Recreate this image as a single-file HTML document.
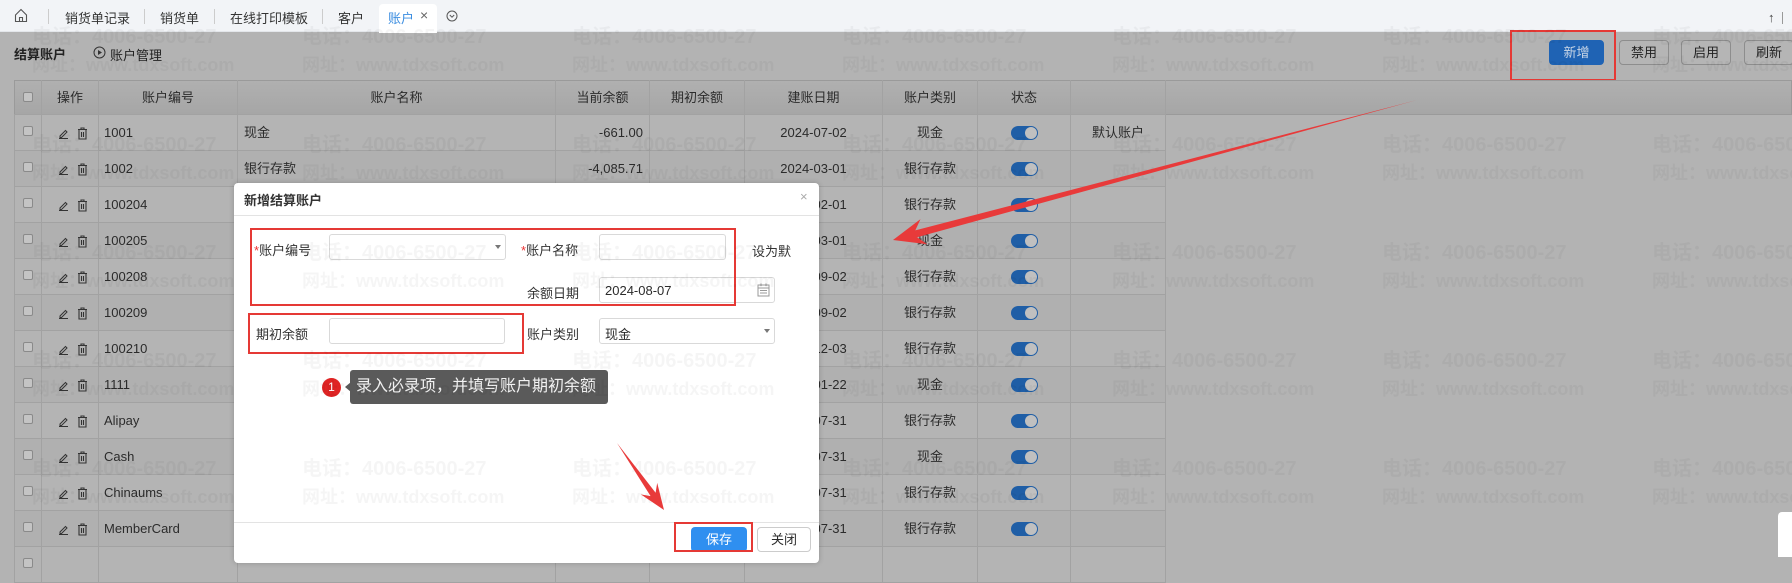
<!DOCTYPE html>
<html><head><meta charset="utf-8"><style>
*{margin:0;padding:0;box-sizing:border-box}
body{width:1792px;height:557px;overflow:hidden;position:relative;font-family:"Liberation Sans","Noto Sans CJK SC",sans-serif;font-size:13px;color:#2b2b2b;background:#b3b3b3}
.a{position:absolute}
.tabbar{left:0;top:0;width:1792px;height:32px;background:#f2f4f7;border-bottom:1px solid #e3e6ea}
.tab{position:absolute;top:8px;font-size:13px;color:#333}
.sep{position:absolute;top:9px;width:1px;height:15px;background:#ccc}
.btn{position:absolute;top:40px;height:25px;border:1px solid #8d8d8d;border-radius:4px;background:#b5b5b5;font-size:13px;text-align:center;line-height:23px;color:#222}
.hdr{left:14px;top:80px;width:1778px;height:35px;background:linear-gradient(#b0b0b0,#a6a6a6);border:1px solid #9a9a9a}
.cell{position:absolute;height:36px;line-height:36px;border-right:1px solid #a2a2a2;border-bottom:1px solid #a2a2a2;white-space:nowrap;overflow:hidden}
.row{position:absolute;left:14px;width:1152px;height:36px}
.cb{position:absolute;width:10px;height:10px;border:1px solid #8a8a8a;border-radius:2px;background:#c4c4c4}
.tg{position:absolute;width:27px;height:14px;border-radius:7px;background:#1f5ea6}
.tg:after{content:"";position:absolute;right:1px;top:1px;width:12px;height:12px;border-radius:50%;background:#c0c0c0}
.wm{position:absolute;font-weight:bold;color:rgba(0,0,0,0.04);white-space:nowrap}
.inp{position:absolute;height:26px;border:1px solid #d9d9d9;border-radius:3px;background:#fff}
.lbl{position:absolute;font-size:13px;color:#333}
.rb{position:absolute;border:2px solid #e53935}
</style></head><body>
<div class="a tabbar">
 <svg class="a" style="left:14px;top:8px" width="14" height="15" viewBox="0 0 14 15"><path d="M1.5 7 L7 1.5 L12.5 7 V13.5 H1.5 Z M5.5 13.5 V9.5 H8.5 V13.5" fill="none" stroke="#555" stroke-width="1.1"/></svg>
 <div class="sep" style="left:48px"></div>
 <div class="tab" style="left:65px">销货单记录</div>
 <div class="sep" style="left:144px"></div>
 <div class="tab" style="left:160px">销货单</div>
 <div class="sep" style="left:214px"></div>
 <div class="tab" style="left:230px">在线打印模板</div>
 <div class="sep" style="left:322px"></div>
 <div class="tab" style="left:338px">客户</div>
 <div class="a" style="left:379px;top:4px;width:58px;height:29px;background:#fff;border-radius:4px 4px 0 0"></div>
 <div class="tab" style="left:388px;color:#3b8de0">账户</div>
 <div class="tab" style="left:420px;color:#666;font-size:14px;top:7px">×</div>
 <svg class="a" style="left:446px;top:10px" width="12" height="12"><circle cx="6" cy="6" r="5" fill="none" stroke="#555"/><path d="M3.8 5 L6 7.2 L8.2 5" fill="none" stroke="#555"/></svg>
 <div class="tab" style="left:1768px;top:10px;color:#444">↑</div>
 <div class="a" style="left:1782px;top:12px;width:1px;height:12px;background:#999"></div>
</div>
<div class="a" style="left:14px;top:44px;font-weight:bold;font-size:13px;color:#222">结算账户</div>
<svg class="a" style="left:93px;top:46px" width="13" height="13"><circle cx="6.5" cy="6.5" r="5.5" fill="none" stroke="#333"/><path d="M5 4 L9 6.5 L5 9Z" fill="#333"/></svg>
<div class="a" style="left:110px;top:45px;font-size:13px;color:#222">账户管理</div>
<div class="btn" style="left:1549px;width:55px;background:#1f63b4;border-color:#1f63b4;color:#c9d6e6">新增</div>
<div class="btn" style="left:1619px;width:50px">禁用</div>
<div class="btn" style="left:1681px;width:50px">启用</div>
<div class="btn" style="left:1744px;width:50px">刷新</div>
<div class="rb" style="left:1510px;top:30px;width:106px;height:51px"></div>
<div class="a hdr"></div>
<div class="a" style="left:14px;top:80px;height:35px;width:1152px">
 <div class="cell" style="left:0;width:28px;height:35px"><div class="cb" style="left:9px;top:12px"></div></div>
 <div class="cell" style="left:28px;width:57px;height:35px;text-align:center">操作</div>
 <div class="cell" style="left:85px;width:139px;height:35px;text-align:center">账户编号</div>
 <div class="cell" style="left:224px;width:318px;height:35px;text-align:center">账户名称</div>
 <div class="cell" style="left:542px;width:94px;height:35px;text-align:center">当前余额</div>
 <div class="cell" style="left:636px;width:95px;height:35px;text-align:center">期初余额</div>
 <div class="cell" style="left:731px;width:138px;height:35px;text-align:center">建账日期</div>
 <div class="cell" style="left:869px;width:95px;height:35px;text-align:center">账户类别</div>
 <div class="cell" style="left:964px;width:93px;height:35px;text-align:center">状态</div>
 <div class="cell" style="left:1057px;width:95px;height:35px"></div>
</div>
<div id="rows"></div>
<script>
var d=[["1001","现金","-661.00","2024-07-02","现金","默认账户"],["1002","银行存款","-4,085.71","2024-03-01","银行存款",""],["100204","","","2024-02-01","银行存款",""],["100205","","","2024-03-01","现金",""],["100208","","","2024-09-02","银行存款",""],["100209","","","2024-09-02","银行存款",""],["100210","","","2024-12-03","银行存款",""],["1111","","","2024-01-22","现金",""],["Alipay","","","2024-07-31","银行存款",""],["Cash","","","2024-07-31","现金",""],["Chinaums","","","2024-07-31","银行存款",""],["MemberCard","","","2024-07-31","银行存款",""],["","","","","",""]];
var h="";
for(var i=0;i<d.length;i++){var r=d[i],t=115+36*i,bg=i%2?"#b0b0b0":"#b4b4b4";
h+='<div class="row" style="top:'+t+'px;background:'+bg+'">'+
'<div class="cell" style="left:0;width:28px;border-left:1px solid #a2a2a2"><div class="cb" style="left:8px;top:11px"></div></div>'+
'<div class="cell" style="left:28px;width:57px">'+(r[0]?'<svg style="position:absolute;left:16px;top:13px" width="11" height="11"><path d="M2 8 L7.5 2.5 L9 4 L3.5 9.5 L2 9.5Z M1 10.5 H10" fill="none" stroke="#333" stroke-width="1"/></svg><svg style="position:absolute;left:35px;top:12px" width="11" height="13"><path d="M1 2.5 H10 M4 2.5 V1 H7 V2.5 M2 2.5 V12 H9 V2.5 M4.5 5 V10 M6.5 5 V10" fill="none" stroke="#333" stroke-width="1.1"/></svg>':'')+'</div>'+
'<div class="cell" style="left:85px;width:139px;padding-left:5px">'+r[0]+'</div>'+
'<div class="cell" style="left:224px;width:318px;padding-left:6px">'+r[1]+'</div>'+
'<div class="cell" style="left:542px;width:94px;text-align:right;padding-right:6px">'+r[2]+'</div>'+
'<div class="cell" style="left:636px;width:95px"></div>'+
'<div class="cell" style="left:731px;width:138px;text-align:center">'+r[3]+'</div>'+
'<div class="cell" style="left:869px;width:95px;text-align:center">'+r[4]+'</div>'+
'<div class="cell" style="left:964px;width:93px">'+(r[0]?'<div class="tg" style="left:33px;top:11px"></div>':'')+'</div>'+
'<div class="cell" style="left:1057px;width:95px;text-align:center">'+r[5]+'</div></div>';}
document.getElementById("rows").innerHTML=h;
</script>
<div class="a" style="left:234px;top:183px;width:585px;height:380px;background:#fff;border-radius:4px;box-shadow:0 0 6px rgba(0,0,0,.2)">
 <div class="a" style="left:10px;top:7px;font-size:13px;font-weight:bold;color:#333">新增结算账户</div>
 <div class="a" style="left:566px;top:6px;color:#aaa;font-size:13px">×</div>
 <div class="a" style="left:0;top:32px;width:585px;height:1px;background:#e3e3e3"></div>
 <div class="lbl" style="left:20px;top:57px"><span style="color:#e33">*</span>账户编号</div>
 <div class="inp" style="left:95px;top:51px;width:177px"><div class="a" style="right:4px;top:10px;border:3px solid transparent;border-top:4px solid #777"></div></div>
 <div class="lbl" style="left:287px;top:57px"><span style="color:#e33">*</span>账户名称</div>
 <div class="inp" style="left:365px;top:51px;width:127px"></div>
 <div class="lbl" style="left:518px;top:58px">设为默</div>
 <div class="lbl" style="left:293px;top:100px">余额日期</div>
 <div class="inp" style="left:365px;top:94px;width:176px;padding:5px 5px;font-size:13px">2024-08-07
  <svg class="a" style="right:4px;top:5px" width="13" height="14"><rect x="1" y="2" width="11" height="11" fill="none" stroke="#999"/><path d="M1 5 H12 M4 0.5 V3 M9 0.5 V3 M3 7.5 H10 M3 10 H10" stroke="#999" fill="none"/></svg></div>
 <div class="lbl" style="left:22px;top:141px">期初余额</div>
 <div class="inp" style="left:95px;top:135px;width:176px"></div>
 <div class="lbl" style="left:293px;top:141px">账户类别</div>
 <div class="inp" style="left:365px;top:135px;width:176px;padding:5px 5px">现金<div class="a" style="right:4px;top:10px;border:3px solid transparent;border-top:4px solid #777"></div></div>
 <div class="a" style="left:0;top:339px;width:585px;height:1px;background:#e3e3e3"></div>
 <div class="a" style="left:457px;top:344px;width:56px;height:25px;background:#2f8ff0;border-radius:4px;color:#fff;text-align:center;line-height:25px">保存</div>
 <div class="a" style="left:523px;top:344px;width:54px;height:25px;border:1px solid #ccc;border-radius:4px;text-align:center;line-height:23px">关闭</div>
</div>
<div class="rb" style="left:250px;top:228px;width:486px;height:78px"></div>
<div class="rb" style="left:248px;top:313px;width:276px;height:41px"></div>
<div class="rb" style="left:674px;top:522px;width:79px;height:30px"></div>
<div class="a" style="left:322px;top:378px;width:19px;height:19px;border-radius:50%;background:#e02424;color:#fff;font-size:12px;text-align:center;line-height:19px">1</div>
<div class="a" style="left:345px;top:382px;border:5px solid transparent;border-right:6px solid #5a5a5a;border-left:0"></div>
<div class="a" style="left:350px;top:370px;width:258px;height:34px;background:#5a5a5a;border-radius:3px;color:#f2f2f2;font-size:16px;line-height:34px;padding-left:6px">录入必录项，并填写账户期初余额</div>
<div class="a" style="left:1778px;top:512px;width:14px;height:45px;background:#fff;border-radius:4px 0 0 0"></div>
<div id="wm"></div>
<script>
var w="";for(var r=0;r<5;r++)for(var c=0;c<7;c++){var x=32+270*c,y=20+108*r;
w+='<div class="wm" style="left:'+x+'px;top:'+y+'px;font-size:20px">电话：4006-6500-27</div><div class="wm" style="left:'+x+'px;top:'+(y+31)+'px;font-size:18px">网址：www.tdxsoft.com</div>';}
document.getElementById("wm").innerHTML=w;
</script>
<svg class="a" style="left:0;top:0" width="1792" height="557">
<polygon points="1417,100 917.1,237.2 927.3,244.3 893,240 920.5,219.1 915.3,230.4" fill="#e83a3a"/>
<polygon points="617,443 655.6,492.7 657.2,482.9 664,510 640.8,494.4 650.6,496.1" fill="#e83a3a"/>
</svg>
</body></html>
